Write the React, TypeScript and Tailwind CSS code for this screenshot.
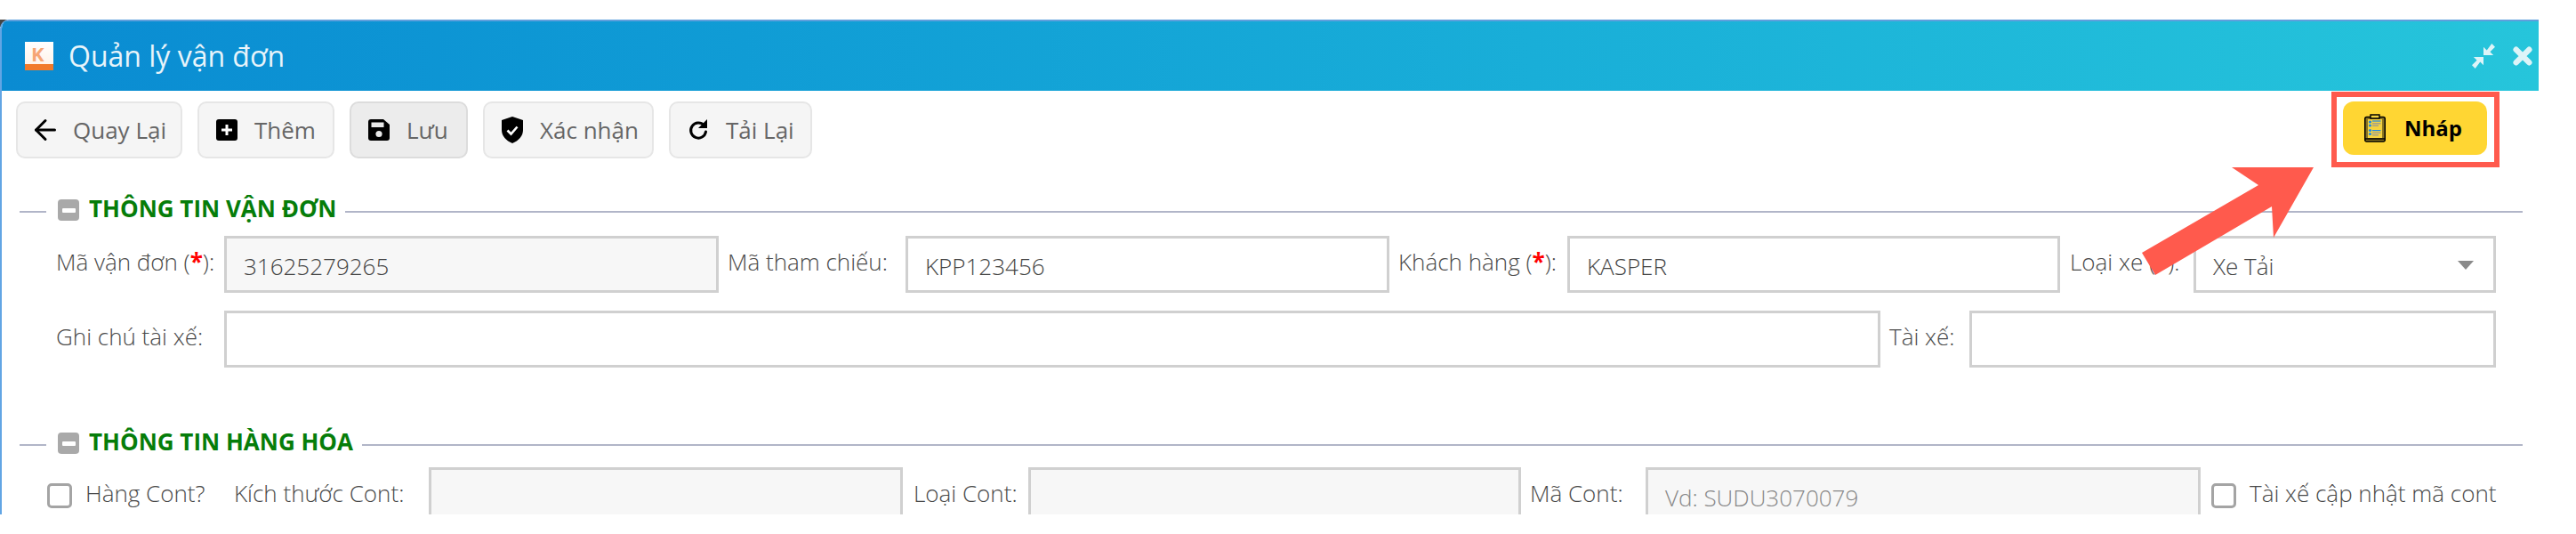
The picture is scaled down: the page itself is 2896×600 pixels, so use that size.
import { ArrowLeft } from 'lucide-react'
import type { ReactNode } from 'react'

function Req() {
  return <span className="font-bold text-[#ff0000]">*</span>
}

function SolidPlus() {
  return (
    <svg width="24" height="24" viewBox="0 0 24 24">
      <rect width="24" height="24" rx="3" fill="#000" />
      <path d="M12 6v12M6 12h12" stroke="#fff" strokeWidth="3" />
    </svg>
  )
}

function SolidSave() {
  return (
    <svg width="24" height="24" viewBox="0 0 24 24">
      <path d="M3 0h14l7 6v15a3 3 0 0 1-3 3H3a3 3 0 0 1-3-3V3a3 3 0 0 1 3-3z" fill="#000" />
      <rect x="3.500" y="3.500" width="14" height="5.500" fill="#e8e8e8" />
      <circle cx="12" cy="16.500" r="3.600" fill="#e8e8e8" />
    </svg>
  )
}

function ShieldCheck() {
  return (
    <svg width="24" height="30" viewBox="0 0 24 30">
      <path d="M12 0l12 4v11c0 7-5 12-12 15C5 27 0 22 0 15V4z" fill="#000" />
      <path d="M6.500 15.500l4 4 7-8" fill="none" stroke="#fff" strokeWidth="2.600" />
    </svg>
  )
}

function Reload() {
  return (
    <svg width="22" height="26" viewBox="0 0 22 26">
      <path d="M17.500 8A8.500 8.500 0 1 0 19.500 15" fill="none" stroke="#000" strokeWidth="3" strokeLinecap="round" />
      <path d="M21 1v10H11z" fill="#000" />
    </svg>
  )
}

function Clipboard() {
  return (
    <svg width="24" height="32" viewBox="0 0 24 32">
      <rect x="0.750" y="3.500" width="22.500" height="27.500" rx="2" fill="#8a7420" stroke="#000" strokeWidth="1.500" />
      <rect x="4" y="6" width="16" height="21" fill="#f4d33f" />
      <path d="M7 1h10v4H7z" fill="#f4d33f" stroke="#000" strokeWidth="1.400" />
      <path d="M1 28h22" stroke="#000" strokeWidth="1.400" />
      <g fill="#1e88e5">
        <circle cx="6.500" cy="9" r="1.600" />
        <circle cx="6.500" cy="13" r="1.600" />
        <circle cx="6.500" cy="18.500" r="1.600" />
        <circle cx="6.500" cy="22.500" r="1.600" />
        <rect x="9" y="7.400" width="9.500" height="1.200" />
        <rect x="9" y="18" width="9.500" height="1.200" />
      </g>
      <g fill="#a4a08a">
        <rect x="9" y="10" width="9.500" height="1.500" />
        <rect x="9" y="12.500" width="7" height="1.500" />
        <rect x="9" y="20.500" width="9.500" height="1.500" />
        <rect x="9" y="23" width="7" height="1.500" />
      </g>
    </svg>
  )
}

function ToolButton({ icon, label, width, active }: { icon: ReactNode; label: string; width: string; active?: boolean }) {
  return (
    <button className={`flex h-[64px] items-center rounded-[10px] border-2 ${width} ${active ? 'border-[#dcdcdc] bg-[#ececec]' : 'border-[#e6e6e6] bg-[#f5f5f5]'}`}>
      <span className="flex w-[62px] shrink-0 justify-center">{icon}</span>
      <span className="text-[26px] text-[#666666]">{label}</span>
    </button>
  )
}

function SectionTitle({ title }: { title: string }) {
  return (
    <div className="flex items-center pl-[20px] pr-[18px]">
      <div className="h-[2px] w-[30px] translate-y-[1px] bg-[#b1b5c8]" />
      <span className="ml-[13px] flex h-[24px] w-[24px] -translate-y-[1px] items-center justify-center rounded-[4px] bg-[#a9a9a9]">
        <span className="h-[5px] w-[15px] rounded-[1px] bg-white" />
      </span>
      <span className="ml-[11px] mr-[10px] -translate-y-[3px] text-[26px] font-bold leading-[32px] text-[#067d0a]">{title}</span>
      <div className="h-[2px] flex-1 translate-y-[1px] bg-[#b1b5c8]" />
    </div>
  )
}

function Label({ children, width }: { children: ReactNode; width: string }) {
  return <label className={`shrink-0 -translate-y-[3px] whitespace-nowrap text-[26px] font-light leading-[36px] text-[#4a4a4a] ${width}`}>{children}</label>
}

function Box({ value, width, disabled, placeholder }: { value?: string; width: string; disabled?: boolean; placeholder?: string }) {
  return (
    <div className={`flex h-[64px] shrink-0 items-center border-[3px] border-[#d0d0d0] pl-[19px] pt-[5px] text-[26px] font-light ${width} ${disabled ? 'bg-[#f7f7f7]' : 'bg-white'} ${placeholder ? 'text-[#888888]' : 'text-[#444444]'}`}>
      {value ?? placeholder}
    </div>
  )
}

function Check({ label }: { label: string }) {
  return (
    <span className="flex shrink-0 items-center">
      <span className="h-[28px] w-[28px] rounded-[5px] border-[3px] border-[#a4a4a4] bg-white" />
      <span className="ml-[15px] -translate-y-[3px] whitespace-nowrap text-[26px] font-light leading-[36px] text-[#4a4a4a]">{label}</span>
    </span>
  )
}

export default function App() {
  return (
    <div className="relative h-[600px] w-[2896px] overflow-hidden bg-white pt-[22px] font-['Open_Sans',sans-serif]">
      {/* dark corner behind the rounded window */}
      <div className="absolute left-0 top-[22px] h-[8px] w-[8px] bg-[#444444]" />
      <div className="relative h-[556px] w-[2854px] overflow-hidden rounded-tl-[10px] border-l-2 border-[#62a5e4] bg-white">
        <div className="flex h-[80px] items-center border-t-2 border-[#5f9fdc] bg-gradient-to-r from-[#0a8bd2] to-[#26c5db] pl-[26px] pr-[7px]">
          <div className="relative h-[32px] w-[32px] bg-gradient-to-b from-white to-[#fff0e4]">
            <span className="absolute left-[7px] top-0 text-[22px] font-bold leading-[26px] text-[#f6a675]">K</span>
            <div className="absolute bottom-0 left-0 h-[7px] w-full bg-[#f27a2a]" />
          </div>
          <span className="ml-[17px] text-[32px] leading-[44px] text-[#e8f4fa]">Quản lý vận đơn</span>
          <div className="ml-auto flex items-center gap-[20px]">
            <svg width="26" height="28" viewBox="0 0 28 30" fill="#ddf4f8">
              <path d="M24 0l4 4-6 6 4 4H14V4l4 4z" />
              <path d="M4 30l-4-4 6-6-4-4H14V26l-4-4z" />
            </svg>
            <svg width="22" height="22" viewBox="0 0 24 24">
              <path d="M4 4l16 16M20 4L4 20" stroke="#ddf4f8" strokeWidth="7" strokeLinecap="round" />
            </svg>
          </div>
        </div>

        <div className="flex items-start pl-[16px] pr-[58px] pt-[12px]">
          <div className="flex gap-[17px]">
            <ToolButton icon={<ArrowLeft size={36} color="#000" strokeWidth={2} />} label="Quay Lại" width="w-[187px]" />
            <ToolButton icon={<SolidPlus />} label="Thêm" width="w-[154px]" />
            <ToolButton icon={<SolidSave />} label="Lưu" width="w-[133px]" active />
            <ToolButton icon={<ShieldCheck />} label="Xác nhận" width="w-[192px]" />
            <ToolButton icon={<Reload />} label="Tải Lại" width="w-[161px]" />
          </div>
          <button className="ml-auto flex h-[60px] w-[162px] items-center rounded-[12px] bg-[#ffd633] pl-[24px] text-[24px] font-bold text-black">
            <Clipboard />
            <span className="ml-[21px]">Nháp</span>
          </button>
        </div>

        <div className="pt-[43px]">
          <SectionTitle title="THÔNG TIN VẬN ĐƠN" />
        </div>

        <div className="flex items-center pl-[61px] pt-[12px]">
          <Label width="w-[189px]">Mã vận đơn (<Req />):</Label>
          <Box value="31625279265" width="w-[556px]" disabled />
          <Label width="w-[210px] pl-[10px]">Mã tham chiếu:</Label>
          <Box value="KPP123456" width="w-[544px]" />
          <Label width="w-[200px] pl-[10px]">Khách hàng (<Req />):</Label>
          <Box value="KASPER" width="w-[554px]" />
          <Label width="w-[150px] pl-[11px]">Loại xe (<Req />):</Label>
          <div className="relative">
            <Box value="Xe Tải" width="w-[340px]" />
            <span className="absolute right-[25px] top-[28px] h-0 w-0 border-x-[9px] border-t-[10px] border-x-transparent border-t-[#8a8a8a]" />
          </div>
        </div>

        <div className="flex items-center pl-[61px] pt-[20px]">
          <Label width="w-[189px]">Ghi chú tài xế:</Label>
          <Box width="w-[1862px]" />
          <Label width="w-[100px] pl-[10px]">Tài xế:</Label>
          <Box width="w-[592px]" />
        </div>

        <div className="pt-[70px]">
          <SectionTitle title="THÔNG TIN HÀNG HÓA" />
        </div>

        <div className="flex items-center pl-[51px] pt-[10px]">
          <div className="w-[208px] shrink-0">
            <Check label="Hàng Cont?" />
          </div>
          <Label width="w-[221px] pl-[2px]">Kích thước Cont:</Label>
          <Box width="w-[533px]" disabled />
          <Label width="w-[141px] pl-[12px]">Loại Cont:</Label>
          <Box width="w-[554px]" disabled />
          <Label width="w-[140px] pl-[10px]">Mã Cont:</Label>
          <Box placeholder="Vd: SUDU3070079" width="w-[624px]" disabled />
          <span className="ml-[12px]">
            <Check label="Tài xế cập nhật mã cont" />
          </span>
        </div>
      </div>

      {/* red annotation around the draft button */}
      <div className="absolute left-[2621px] top-[103px] h-[85px] w-[189px] border-[6px] border-[#ff5a4d]" />
      <svg className="absolute left-0 top-0" width="2896" height="600" viewBox="0 0 2896 600">
        <polygon points="2601,188 2509,188 2539,208 2408,284 2423,309 2554,232 2556,267" fill="#ff5a4d" />
      </svg>
    </div>
  )
}
